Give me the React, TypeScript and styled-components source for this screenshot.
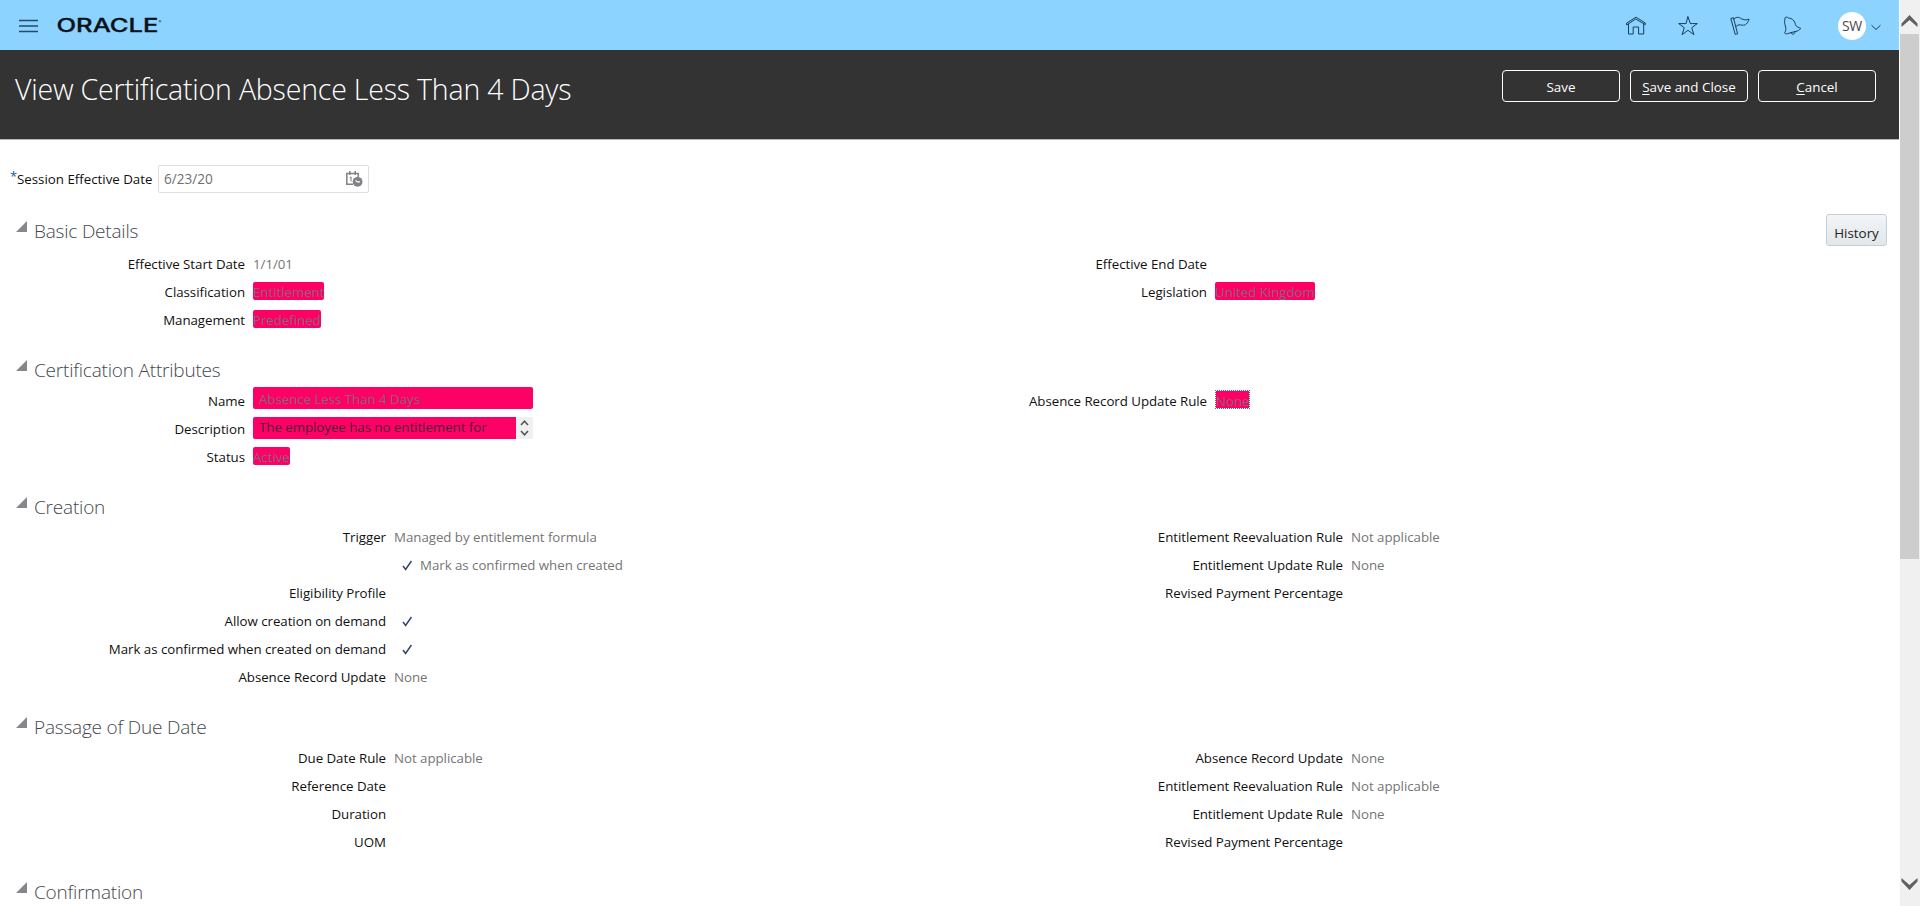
import React from "react";
import styled, { createGlobalStyle } from "styled-components";

const Global = createGlobalStyle`
  * { box-sizing: border-box; }
  html, body { margin: 0; padding: 0; background: #fff; overflow: hidden; }
  body { font-family: "Open Sans", "Noto Sans", "Liberation Sans", sans-serif; font-size: 13px; color: #111; }
  button { font-family: inherit; }
`;

const Window = styled.div`
  display: flex;
  width: 1920px;
  height: 906px;
  overflow: hidden;
`;

const Page = styled.div`
  width: 1899px;
  height: 906px;
  overflow: hidden;
  display: flex;
  flex-direction: column;
`;

const TopBar = styled.header`
  flex: none;
  height: 50px;
  background: #8cd3ff;
  display: flex;
  align-items: center;
  justify-content: space-between;
  padding: 1px 18px 0 19px;
`;

const Brand = styled.div`
  display: flex;
  align-items: center;
  gap: 19px;
`;

const Tools = styled.nav`
  display: flex;
  align-items: center;
  gap: 32px;
`;

const User = styled.div`
  display: flex;
  align-items: center;
  gap: 5px;
  margin-left: 4px;
`;

const Avatar = styled.span`
  width: 28px;
  height: 28px;
  border-radius: 50%;
  background: #fff;
  color: #4a4a4a;
  font-size: 14px;
  letter-spacing: -0.2px;
  line-height: 28px;
  text-align: center;
`;

const TitleBar = styled.div`
  flex: none;
  height: 90px;
  background: #333;
  border-bottom: 1px solid #b8b8b8;
  display: flex;
  justify-content: space-between;
  align-items: flex-start;
  padding: 20px 23px 0 15px;
`;

const Title = styled.h1`
  margin: -1px 0 0;
  color: #fff;
  font-size: 28.5px;
  font-weight: 300;
  line-height: 40px;
  letter-spacing: -0.19px;
  white-space: nowrap;
`;

const Actions = styled.div`
  display: flex;
  gap: 10px;
`;

const Action = styled.button`
  width: 118px;
  height: 32px;
  padding: 2px 0 0;
  border: 1px solid #fff;
  border-radius: 4px;
  background: transparent;
  color: #fff;
  font-size: 13.4px;
  letter-spacing: 0;
  u { text-underline-offset: 2px; }
`;

const SessionRow = styled.div`
  display: flex;
  align-items: center;
  height: 29px;
  margin-top: 24px;
  padding-left: 10px;
`;

const Required = styled.span`
  width: 7px;
  height: 29px;
  color: #0a5ea8;
  font-size: 13px;
  line-height: 25px;
`;

const SessionLabel = styled.label`
  width: 141px;
  font-size: 13.3px;
  letter-spacing: 0;
  white-space: nowrap;
`;

const DateField = styled.div`
  width: 211px;
  height: 28px;
  border: 1px solid #dcdfe2;
  border-radius: 2px;
  display: flex;
  align-items: center;
  justify-content: space-between;
  padding: 0 5px 0 5px;
  color: #707070;
  font-size: 13.6px;
`;

const Section = styled.section`
  margin-top: 21px;
`;

const Sections = styled.main`
  padding-top: 2px;
`;

const SectionHead = styled.div<{ $gap: number }>`
  display: flex;
  align-items: flex-start;
  height: 30px;
  margin-bottom: ${(p) => p.$gap}px;
  padding: 0 12px 0 16px;
`;

const Disclosure = styled.svg`
  flex: none;
  margin: 5px 7px 0 0;
`;

const Heading = styled.h2`
  flex: 1;
  margin: 0;
  color: #44484d;
  font-size: 19px;
  font-weight: 300;
  line-height: 30px;
  letter-spacing: -0.2px;
`;

const History = styled.button`
  flex: none;
  width: 61px;
  height: 32px;
  margin-top: -2px;
  padding: 6px 0 0;
  border: 1px solid #c4ced7;
  border-radius: 3px;
  background: linear-gradient(#f3f5f7, #e2e7eb);
  color: #222;
  font-size: 13.4px;
`;

const Columns = styled.div<{ $split: number }>`
  display: grid;
  grid-template-columns: ${(p) => p.$split}px 1fr;
`;

const Row = styled.div<{ $label: number }>`
  display: grid;
  grid-template-columns: ${(p) => p.$label}px 1fr;
  column-gap: 8px;
  height: 28px;
  line-height: 28px;
  font-size: 13.3px;
  letter-spacing: -0.04px;
  white-space: nowrap;
`;

const Label = styled.span`
  text-align: right;
  color: #111;
`;

const Value = styled.span`
  display: flex;
  align-items: flex-start;
  color: #757575;
`;

const Chip = styled.span<{ $focus?: boolean }>`
  height: ${(p) => (p.$focus ? 19 : 18)}px;
  margin-top: ${(p) => (p.$focus ? 3 : 4)}px;
  line-height: 20px;
  border-radius: ${(p) => (p.$focus ? 0 : 2)}px;
  border: ${(p) => (p.$focus ? "1px dotted #7c5a70" : "0")};
  background: #ff0066;
  background-clip: padding-box;
  color: #85657a;
`;

const NameBox = styled.span`
  width: 280px;
  height: 22px;
  padding-left: 6px;
  border-radius: 2px;
  background: #ff0066;
  color: #85657a;
  line-height: 24px;
`;

const Description = styled.span`
  display: flex;
  width: 280px;
  height: 22px;
  margin-top: 2px;
  background: #f0f0f0;
`;

const DescriptionText = styled.span`
  width: 263px;
  padding-left: 6px;
  border-radius: 2px 0 0 2px;
  background: #ff0066;
  color: #4a2236;
  line-height: 21px;
`;

const Spinner = styled.span`
  width: 17px;
  height: 22px;
  display: flex;
  flex-direction: column;
  align-items: center;
  justify-content: space-between;
  padding: 3px 0;
`;

const Mark = styled.svg`
  flex: none;
  margin: 9px 7px 0 8px;
`;

const Scrollbar = styled.aside`
  width: 21px;
  height: 906px;
  border-left: 1px solid #fff;
  background: #f0f0f0;
  display: flex;
  flex-direction: column;
  align-items: center;
`;

const ScrollButton = styled.div<{ $end?: boolean }>`
  height: 34px;
  padding-top: ${(p) => (p.$end ? 5 : 14)}px;
  padding-right: 1px;
  line-height: 0;
`;

const Thumb = styled.div`
  width: 19px;
  height: 525px;
  margin-right: 1px;
  background: #cdcdcd;
`;

const Spacer = styled.div`
  flex: 1;
`;

const Check = () => (
  <Mark width="11" height="11" viewBox="0 0 11 11" fill="none" stroke="#34456f" strokeWidth="1.5">
    <path d="M1 6 L3.6 9.4 L9.4 1" />
  </Mark>
);

const iconProps = { fill: "none", stroke: "#173e5c", strokeWidth: 1, strokeLinejoin: "round" as const, strokeLinecap: "round" as const };

type FieldData = { label?: string; value?: React.ReactNode };

const Fields = ({ items, label }: { items: FieldData[]; label: number }) => (
  <div>
    {items.map((f, i) => (
      <Row key={i} $label={label}>
        <Label>{f.label}</Label>
        <Value>{f.value}</Value>
      </Row>
    ))}
  </div>
);

type PanelProps = {
  title: string;
  gap?: number;
  split?: number;
  labels?: [number, number];
  left?: FieldData[];
  right?: FieldData[];
  action?: React.ReactNode;
};

const Panel = ({ title, gap = 2, split = 962, labels = [245, 245], left = [], right = [], action }: PanelProps) => (
  <Section>
    <SectionHead $gap={gap}>
      <Disclosure width="11" height="11" viewBox="0 0 11 11">
        <path d="M11 0 V11 H0 Z" fill="#85878a" />
      </Disclosure>
      <Heading>{title}</Heading>
      {action}
    </SectionHead>
    <Columns $split={split}>
      <Fields items={left} label={labels[0]} />
      <Fields items={right} label={labels[1]} />
    </Columns>
  </Section>
);

export default function App() {
  return (
    <Window>
      <Global />
      <Page>
        <TopBar>
          <Brand>
            <svg width="19" height="14" viewBox="0 0 19 14" stroke="#234a66" strokeWidth="1.4">
              <path d="M0 1.5H19M0 7H19M0 12.5H19" />
            </svg>
            <svg width="105" height="20" viewBox="0 0 105 20">
              <text x="-0.5" y="16" fontFamily="Inter" fontSize="18" fontWeight="500" textLength="102" lengthAdjust="spacingAndGlyphs" fill="#0b1117" stroke="#0b1117" strokeWidth="0.3">ORACLE</text>
              <text x="101.5" y="7" fontFamily="Inter" fontSize="4" fill="#0b1117">®</text>
            </svg>
          </Brand>
          <Tools>
            <svg width="20" height="20" viewBox="0 0 20 20" {...iconProps}>
              <path d="M.7 8.6V7L10 1.2 19.3 7V8.6L10 3.2Z M2.5 8.2V18H7.2V11H12.6V18H17.7V8.2" />
            </svg>
            <svg width="20" height="20" viewBox="0 0 20 20" {...iconProps}>
              <path d="M10 .8 12.3 7.6H19.3L13.7 11.7 15.9 18.6 10 14.3 4.1 18.6 6.3 11.7.7 7.6H7.7Z" />
            </svg>
            <svg width="20" height="20" viewBox="0 0 20 20" {...iconProps}>
              <path d="M1.2 2.4 3.4 1.7 7.6 17.8 5.6 18.3Z M3.8 3C7 .3 9 1.2 11 2.5S16 4.5 19 3.2C18 7 15.5 9.7 12.5 9.2S8.5 8.3 6 10.4" />
            </svg>
            <svg width="20" height="20" viewBox="0 0 20 20" {...iconProps}>
              <path d="M2.5 2.2C4 .7 5 .7 6.3 2 10.5 2.2 12.8 5 13.4 8.6 14 10.8 16.5 11.3 18.6 12.3 18 13.6 17 14.4 15.2 15L5.2 17.7C3.8 18 3 17.8 2.5 16.8 4.2 14.5 4 13 3.6 11 2.8 8 1.8 5 3.2 2.8 M9 16.8C10 19.2 13 18.6 13 15.8" />
            </svg>
            <User>
              <Avatar>SW</Avatar>
              <svg width="10" height="8" viewBox="0 0 10 8" {...iconProps}>
                <path d="M.8 3.5 5 7.5 9.2 3.5" />
              </svg>
            </User>
          </Tools>
        </TopBar>
        <TitleBar>
          <Title>View Certification Absence Less Than 4 Days</Title>
          <Actions>
            <Action>Save</Action>
            <Action><u>S</u>ave and Close</Action>
            <Action><u>C</u>ancel</Action>
          </Actions>
        </TitleBar>
        <SessionRow>
          <Required>*</Required>
          <SessionLabel>Session Effective Date</SessionLabel>
          <DateField>
            6/23/20
            <svg width="18" height="17" viewBox="0 0 18 17">
              <path d="M8 14.2H1.8V3.5H13.2V7M4.8 1V5M10.2 1V5" fill="none" stroke="#808285" strokeWidth="1.5" />
              <path d="M4.7 7.2H6V11.5" fill="none" stroke="#808285" strokeWidth="1.1" />
              <circle cx="12.6" cy="11.8" r="4.9" fill="#808285" />
              <path d="M10.5 10.3 12.3 11.9H15" fill="none" stroke="#fff" strokeWidth="1.1" />
            </svg>
          </DateField>
        </SessionRow>
        <Sections>
          <Panel
            title="Basic Details"
            gap={4}
            action={<History>History</History>}
            left={[
              { label: "Effective Start Date", value: "1/1/01" },
              { label: "Classification", value: <Chip>Entitlement</Chip> },
              { label: "Management", value: <Chip>Predefined</Chip> },
            ]}
            right={[{ label: "Effective End Date" }, { label: "Legislation", value: <Chip>United Kingdom</Chip> }]}
          />
          <Panel
            title="Certification Attributes"
            left={[
              { label: "Name", value: <NameBox>Absence Less Than 4 Days</NameBox> },
              {
                label: "Description",
                value: (
                  <Description>
                    <DescriptionText>The employee has no entitlement for</DescriptionText>
                    <Spinner>
                      <svg width="9" height="6" viewBox="0 0 9 6" fill="none" stroke="#555" strokeWidth="1.6"><path d="M1 5 4.5 1.2 8 5" /></svg>
                      <svg width="9" height="6" viewBox="0 0 9 6" fill="none" stroke="#555" strokeWidth="1.6"><path d="M1 1 4.5 4.8 8 1" /></svg>
                    </Spinner>
                  </Description>
                ),
              },
              { label: "Status", value: <Chip>Active</Chip> },
            ]}
            right={[{ label: "Absence Record Update Rule", value: <Chip $focus>None</Chip> }]}
          />
          <Panel
            title="Creation"
            gap={1}
            split={957}
            labels={[386, 386]}
            left={[
              { label: "Trigger", value: "Managed by entitlement formula" },
              { value: <><Check />Mark as confirmed when created</> },
              { label: "Eligibility Profile" },
              { label: "Allow creation on demand", value: <Check /> },
              { label: "Mark as confirmed when created on demand", value: <Check /> },
              { label: "Absence Record Update", value: "None" },
            ]}
            right={[
              { label: "Entitlement Reevaluation Rule", value: "Not applicable" },
              { label: "Entitlement Update Rule", value: "None" },
              { label: "Revised Payment Percentage" },
            ]}
          />
          <Panel
            title="Passage of Due Date"
            split={957}
            labels={[386, 386]}
            left={[
              { label: "Due Date Rule", value: "Not applicable" },
              { label: "Reference Date" },
              { label: "Duration" },
              { label: "UOM" },
            ]}
            right={[
              { label: "Absence Record Update", value: "None" },
              { label: "Entitlement Reevaluation Rule", value: "Not applicable" },
              { label: "Entitlement Update Rule", value: "None" },
              { label: "Revised Payment Percentage" },
            ]}
          />
          <Panel title="Confirmation" />
        </Sections>
      </Page>
      <Scrollbar>
        <ScrollButton>
          <svg width="17" height="14" viewBox="0 0 17 14"><path d="M.5 9.5 8.5 1 16.5 9.5V13L8.5 6 .5 13Z" fill="#606060" /></svg>
        </ScrollButton>
        <Thumb />
        <Spacer />
        <ScrollButton $end>
          <svg width="17" height="14" viewBox="0 0 17 14"><path d="M.5 4.5 8.5 13 16.5 4.5V1L8.5 8 .5 1Z" fill="#606060" /></svg>
        </ScrollButton>
      </Scrollbar>
    </Window>
  );
}
